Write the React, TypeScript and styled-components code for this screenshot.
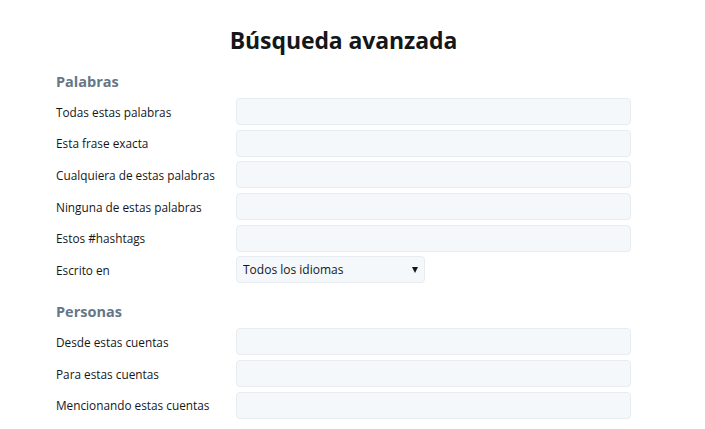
import React from "react";
import styled, { createGlobalStyle } from "styled-components";

const Global = createGlobalStyle`
  html, body { margin: 0; padding: 0; background: #fff; }
  body { font-family: "Open Sans", "Noto Sans", sans-serif; color: #14171a; }
  * { box-sizing: border-box; }
`;

const Page = styled.div`
  width: 575px;
  margin-left: 56px;
  padding-top: 23px;
`;

const Title = styled.h1`
  margin: 0 0 15px;
  text-align: center;
  font-family: "Open Sans", sans-serif;
  font-size: 23px;
  font-weight: 700;
  line-height: 34px;
  letter-spacing: -0.1px;
  color: #14171a;
`;

const Section = styled.section`
  margin-bottom: 19px;
`;

const SectionTitle = styled.h2`
  margin: 0 0 6px;
  font-size: 14.5px;
  font-weight: 700;
  line-height: 20px;
  color: #657786;
`;

const Rows = styled.div`
  display: flex;
  flex-direction: column;
  gap: 4.7px;
`;

const Row = styled.label`
  display: grid;
  grid-template-columns: 180px 1fr;
  align-items: center;
  height: 27px;
`;

const LabelText = styled.span`
  font-size: 11.8px;
  color: #14171a;
  white-space: nowrap;
`;

const Input = styled.input`
  height: 27px;
  width: 100%;
  background: #f5f8fa;
  border: 1px solid #e6ecf0;
  border-radius: 4px;
  outline: none;
  padding: 0 7px;
  font: inherit;
  font-size: 12px;
`;

const SelectWrap = styled.div`
  position: relative;
  width: 189px;
  height: 27px;
`;

const Select = styled.select`
  appearance: none;
  width: 100%;
  height: 27px;
  background: #f5f8fa;
  border: 1px solid #e6ecf0;
  border-radius: 4px;
  padding: 0 6px;
  font-family: "Open Sans", sans-serif;
  font-size: 12px;
  color: #14171a;
  outline: none;
`;

const Caret = styled.span`
  position: absolute;
  right: 7px;
  top: 11px;
  width: 0;
  height: 0;
  border-left: 3.5px solid transparent;
  border-right: 3.5px solid transparent;
  border-top: 6px solid #14171a;
  pointer-events: none;
`;

const palabras = [
  "Todas estas palabras",
  "Esta frase exacta",
  "Cualquiera de estas palabras",
  "Ninguna de estas palabras",
  "Estos #hashtags",
];

const personas = [
  "Desde estas cuentas",
  "Para estas cuentas",
  "Mencionando estas cuentas",
];

export default function App() {
  return (
    <>
      <Global />
      <Page>
        <Title>Búsqueda avanzada</Title>
        <Section>
          <SectionTitle>Palabras</SectionTitle>
          <Rows>
            {palabras.map((l) => (
              <Row key={l}>
                <LabelText>{l}</LabelText>
                <Input type="text" />
              </Row>
            ))}
            <Row>
              <LabelText>Escrito en</LabelText>
              <SelectWrap>
                <Select defaultValue="all">
                  <option value="all">Todos los idiomas</option>
                </Select>
                <Caret />
              </SelectWrap>
            </Row>
          </Rows>
        </Section>
        <Section>
          <SectionTitle>Personas</SectionTitle>
          <Rows>
            {personas.map((l) => (
              <Row key={l}>
                <LabelText>{l}</LabelText>
                <Input type="text" />
              </Row>
            ))}
          </Rows>
        </Section>
      </Page>
    </>
  );
}
